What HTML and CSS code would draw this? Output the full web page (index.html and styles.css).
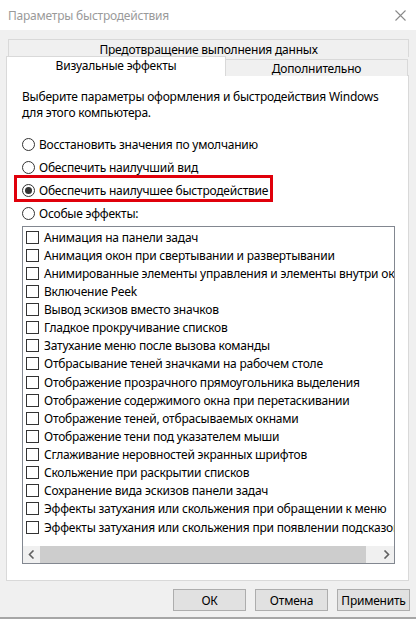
FILE: index.html
```html
<!DOCTYPE html>
<html lang="ru">
<head>
    <meta charset="UTF-8">
    <title>Параметры быстродействия</title>
    <link rel="stylesheet" href="styles.css">
</head>
<body>

    <div class="window">
        <div class="titlebar">
            <span class="title">Параметры быстродействия</span>
            <svg class="close" width="11" height="11" viewBox="0 0 11 11">
                <path d="M0.5 0.5 L10.5 10.5 M10.5 0.5 L0.5 10.5" stroke="#8a8a8a" stroke-width="1.1" fill="none"/>
            </svg>
        </div>

        <!-- Tabs -->
        <div class="tab-back">Предотвращение выполнения данных</div>
        <div class="tab-row">
            <div class="tab active">Визуальные эффекты</div>
            <div class="tab">Дополнительно</div>
        </div>

        <div class="panel">
            <p class="desc">Выберите параметры оформления и быстродействия Windows для этого компьютера.</p>

            <div class="radios">
                <div class="radio-row"><span class="radio"></span>Восстановить значения по умолчанию</div>
                <div class="radio-row"><span class="radio"></span>Обеспечить наилучший вид</div>
                <div class="radio-row"><span class="radio on"></span>Обеспечить наилучшее быстродействие</div>
                <div class="radio-row"><span class="radio"></span>Особые эффекты:</div>
                <div class="mark"></div>
            </div>

            <div class="listbox">
                <div class="items">
                    <div class="item"><span class="check"></span>Анимация на панели задач</div>
                    <div class="item"><span class="check"></span>Анимация окон при свертывании и развертывании</div>
                    <div class="item"><span class="check"></span>Анимированные элементы управления и элементы внутри окна</div>
                    <div class="item"><span class="check"></span>Включение Peek</div>
                    <div class="item"><span class="check"></span>Вывод эскизов вместо значков</div>
                    <div class="item"><span class="check"></span>Гладкое прокручивание списков</div>
                    <div class="item"><span class="check"></span>Затухание меню после вызова команды</div>
                    <div class="item"><span class="check"></span>Отбрасывание теней значками на рабочем столе</div>
                    <div class="item"><span class="check"></span>Отображение прозрачного прямоугольника выделения</div>
                    <div class="item"><span class="check"></span>Отображение содержимого окна при перетаскивании</div>
                    <div class="item"><span class="check"></span>Отображение теней, отбрасываемых окнами</div>
                    <div class="item"><span class="check"></span>Отображение тени под указателем мыши</div>
                    <div class="item"><span class="check"></span>Сглаживание неровностей экранных шрифтов</div>
                    <div class="item"><span class="check"></span>Скольжение при раскрытии списков</div>
                    <div class="item"><span class="check"></span>Сохранение вида эскизов панели задач</div>
                    <div class="item"><span class="check"></span>Эффекты затухания или скольжения при обращении к меню</div>
                    <div class="item"><span class="check"></span>Эффекты затухания или скольжения при появлении подсказок</div>
                </div>
                <div class="hscroll">
                    <span class="arrow">
                        <svg width="8" height="9" viewBox="0 0 8 9"><path d="M5.5 0.5 L1.5 4.5 L5.5 8.5" stroke="#606060" stroke-width="1.6" fill="none"/></svg>
                    </span>
                    <span class="track"><span class="thumb"></span></span>
                    <span class="arrow">
                        <svg width="8" height="9" viewBox="0 0 8 9"><path d="M2.5 0.5 L6.5 4.5 L2.5 8.5" stroke="#606060" stroke-width="1.6" fill="none"/></svg>
                    </span>
                </div>
            </div>
        </div>

        <div class="buttons">
            <button>ОК</button>
            <button>Отмена</button>
            <button>Применить</button>
        </div>
    </div>

</body>
</html>
```

FILE: styles.css
```css
body {
    margin: 0;
    padding: 0;
    font-family: "Noto Sans", "Open Sans", sans-serif;
    font-size: 12px;
    letter-spacing: -0.22px;
    color: #000;
}

.window {
    width: 416px;
    height: 619px;
    background-color: #f0f0f0;
    overflow: hidden;
    box-sizing: border-box;
    border-bottom: 2px solid #a6a6a6;
}

.titlebar {
    height: 30px;
    background-color: #fff;
    display: flex;
    align-items: center;
    justify-content: space-between;
    padding: 0 10px 0 8px;
}

.title {
    color: #9a9a9a;
}

/* Tabs */
.tab-back {
    margin: 9px 0 0 8px;
    width: 401px;
    height: 18px;
    box-sizing: border-box;
    border: 1px solid #d9d9d9;
    border-bottom: none;
    text-align: center;
    line-height: 19px;
}

.tab-row {
    display: flex;
    align-items: flex-end;
    margin-top: -1px;
    margin-bottom: -1px;
    margin-left: 6px;
    position: relative;
    z-index: 1;
}

.tab {
    height: 17px;
    width: 183px;
    box-sizing: border-box;
    border: 1px solid #d9d9d9;
    border-bottom: none;
    background-color: #f0f0f0;
    text-align: center;
    line-height: 17px;
    margin-left: -1px;
}

.tab.active {
    width: 220px;
    height: 20px;
    margin-left: 0;
    background-color: #fff;
    line-height: 17px;
    position: relative;
    z-index: 1;
}

.panel {
    margin-left: 6px;
    width: 403px;
    height: 506px;
    box-sizing: border-box;
    background-color: #fff;
    border: 1px solid #d9d9d9;
    padding: 13px 13px 0 15px;
}

.desc {
    margin: 0;
    line-height: 16px;
}

.radios {
    margin-top: 12px;
    position: relative;
}

.radio-row {
    height: 23px;
    display: flex;
    align-items: center;
    white-space: nowrap;
}

.radio {
    width: 13px;
    height: 13px;
    box-sizing: border-box;
    border: 1px solid #333;
    border-radius: 50%;
    margin-right: 4px;
    display: flex;
    align-items: center;
    justify-content: center;
}

.radio.on::after {
    content: "";
    width: 7px;
    height: 7px;
    border-radius: 50%;
    background-color: #333;
}

/* red highlight drawn over the third option */
.mark {
    position: absolute;
    left: -8px;
    top: 42px;
    width: 259px;
    height: 27px;
    box-sizing: border-box;
    border: 3px solid #e0000b;
}

.listbox {
    margin-top: 1px;
    width: 373px;
    height: 338px;
    box-sizing: border-box;
    border: 1px solid #828790;
    display: flex;
    flex-direction: column;
}

.items {
    flex: 1;
    overflow: hidden;
    padding-top: 1px;
}

.item {
    height: 18.125px;
    display: flex;
    align-items: center;
    white-space: nowrap;
}

.check {
    flex: none;
    width: 13px;
    height: 13px;
    box-sizing: border-box;
    border: 1px solid #333;
    margin: 0 5px 0 3px;
}

.hscroll {
    height: 17px;
    display: flex;
    background-color: #f0f0f0;
}

.arrow {
    width: 17px;
    display: flex;
    align-items: center;
    justify-content: center;
}

.track {
    flex: 1;
    display: flex;
}

.thumb {
    width: 326px;
    background-color: #cdcdcd;
}

.buttons {
    display: flex;
    justify-content: flex-end;
    gap: 9px;
    margin-top: 8px;
    padding-right: 6px;
}

button {
    width: 73px;
    height: 22px;
    font-family: inherit;
    font-size: 12px;
    letter-spacing: inherit;
    color: #000;
    background-color: #e1e1e1;
    border: 1px solid #adadad;
    padding: 0;
}
```
